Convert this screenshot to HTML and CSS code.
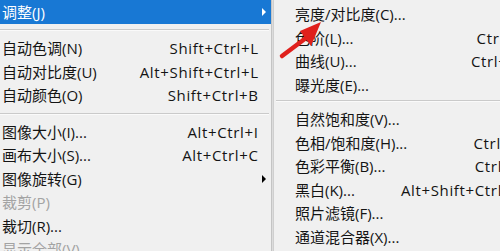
FILE: index.html
```html
<!DOCTYPE html>
<html lang="zh-CN">
<head>
<meta charset="utf-8">
<link rel="stylesheet" href="styles.css">
</head>
<body>
<div class="screen">
  <div class="menu main">
    <div class="item active"><span class="label">调整(J)</span><span class="sub-arrow white"></span></div>
    <div class="sep"></div>
    <div class="item"><span class="label">自动色调(N)</span><span class="key">Shift+Ctrl+L</span></div>
    <div class="item"><span class="label">自动对比度(U)</span><span class="key">Alt+Shift+Ctrl+L</span></div>
    <div class="item"><span class="label">自动颜色(O)</span><span class="key">Shift+Ctrl+B</span></div>
    <div class="sep"></div>
    <div class="item"><span class="label">图像大小(I)...</span><span class="key">Alt+Ctrl+I</span></div>
    <div class="item"><span class="label">画布大小(S)...</span><span class="key">Alt+Ctrl+C</span></div>
    <div class="item"><span class="label">图像旋转(G)</span><span class="sub-arrow"></span></div>
    <div class="item disabled"><span class="label">裁剪(P)</span></div>
    <div class="item"><span class="label">裁切(R)...</span></div>
    <div class="item disabled"><span class="label">显示全部(V)</span></div>
  </div>
  <div class="menu submenu">
    <div class="item"><span class="label">亮度/对比度(C)...</span></div>
    <div class="item"><span class="label">色阶(L)...</span><span class="key">Ctrl+L</span></div>
    <div class="item"><span class="label">曲线(U)...</span><span class="key">Ctrl+M</span></div>
    <div class="item"><span class="label">曝光度(E)...</span></div>
    <div class="sep"></div>
    <div class="item"><span class="label">自然饱和度(V)...</span></div>
    <div class="item"><span class="label">色相/饱和度(H)...</span><span class="key">Ctrl+U</span></div>
    <div class="item"><span class="label">色彩平衡(B)...</span><span class="key">Ctrl+B</span></div>
    <div class="item"><span class="label">黑白(K)...</span><span class="key">Alt+Shift+Ctrl+B</span></div>
    <div class="item"><span class="label">照片滤镜(F)...</span></div>
    <div class="item"><span class="label">通道混合器(X)...</span></div>
  </div>
  <svg class="pointer" width="500" height="251" viewBox="0 0 500 251">
    <line x1="282" y1="56" x2="306" y2="38" stroke="#e0201c" stroke-width="4.5" stroke-linecap="round"/>
    <polygon points="321,22 300,31 311,46" fill="#e0201c"/>
  </svg>
</div>
</body>
</html>
```
FILE: styles.css
```css
html, body {
  margin: 0;
  padding: 0;
  background: #f0f0f0;
}
.screen {
  position: relative;
  width: 500px;
  height: 251px;
  overflow: hidden;
  display: flex;
  align-items: flex-start;
  font-family: "Open Sans", "Noto Sans CJK SC", sans-serif;
  font-size: 15px;
  color: #141414;
}
.menu {
  background: #f0f0f0;
  flex: none;
}
.main {
  width: 271px;
  height: 270px;
  border-right: 1px solid #c4c4c4;
  box-shadow: 1px 0 2px rgba(0,0,0,0.12);
}
.submenu {
  width: 262px;
  height: 270px;
  margin-left: 1px;
  padding-top: 3px;
  border-left: 1px solid #cfcfcf;
  box-sizing: border-box;
}
.item {
  height: 23.5px;
  display: flex;
  align-items: center;
  justify-content: space-between;
  white-space: nowrap;
  position: relative;
  line-height: 1;
}
.key {
  letter-spacing: 0.65px;
  margin-right: -0.65px;
}
.main .item {
  padding: 0 13px 0 2px;
}
.submenu .item {
  padding: 0 14px 0 21px;
}
.main .item.active {
  height: 24px;
  background: #1878d4;
  color: #fff;
}
.disabled {
  color: #a3a3a3;
}
.sep {
  height: 13px;
  display: flex;
  flex-direction: column;
  justify-content: flex-start;
}
.main .sep {
  padding-top: 5px;
  box-sizing: border-box;
}
.main .sep::before {
  content: "";
  display: block;
  height: 1px;
  margin-right: 2px;
  background: #cacaca;
  border-bottom: 1px solid #fafafa;
}
.submenu .sep {
  height: 11px;
  padding-top: 3px;
  box-sizing: border-box;
}
.submenu .sep::before {
  content: "";
  display: block;
  height: 1px;
  margin-left: 2px;
  background: #cacaca;
  border-bottom: 1px solid #fafafa;
}
.sub-arrow {
  position: absolute;
  right: 5px;
  top: 50%;
  margin-top: -4px;
  width: 0;
  height: 0;
  border-top: 4px solid transparent;
  border-bottom: 4px solid transparent;
  border-left: 4px solid #000;
}
.sub-arrow.white {
  border-left-color: #fff;
}
.pointer {
  position: absolute;
  left: 0;
  top: 0;
  pointer-events: none;
}
```
